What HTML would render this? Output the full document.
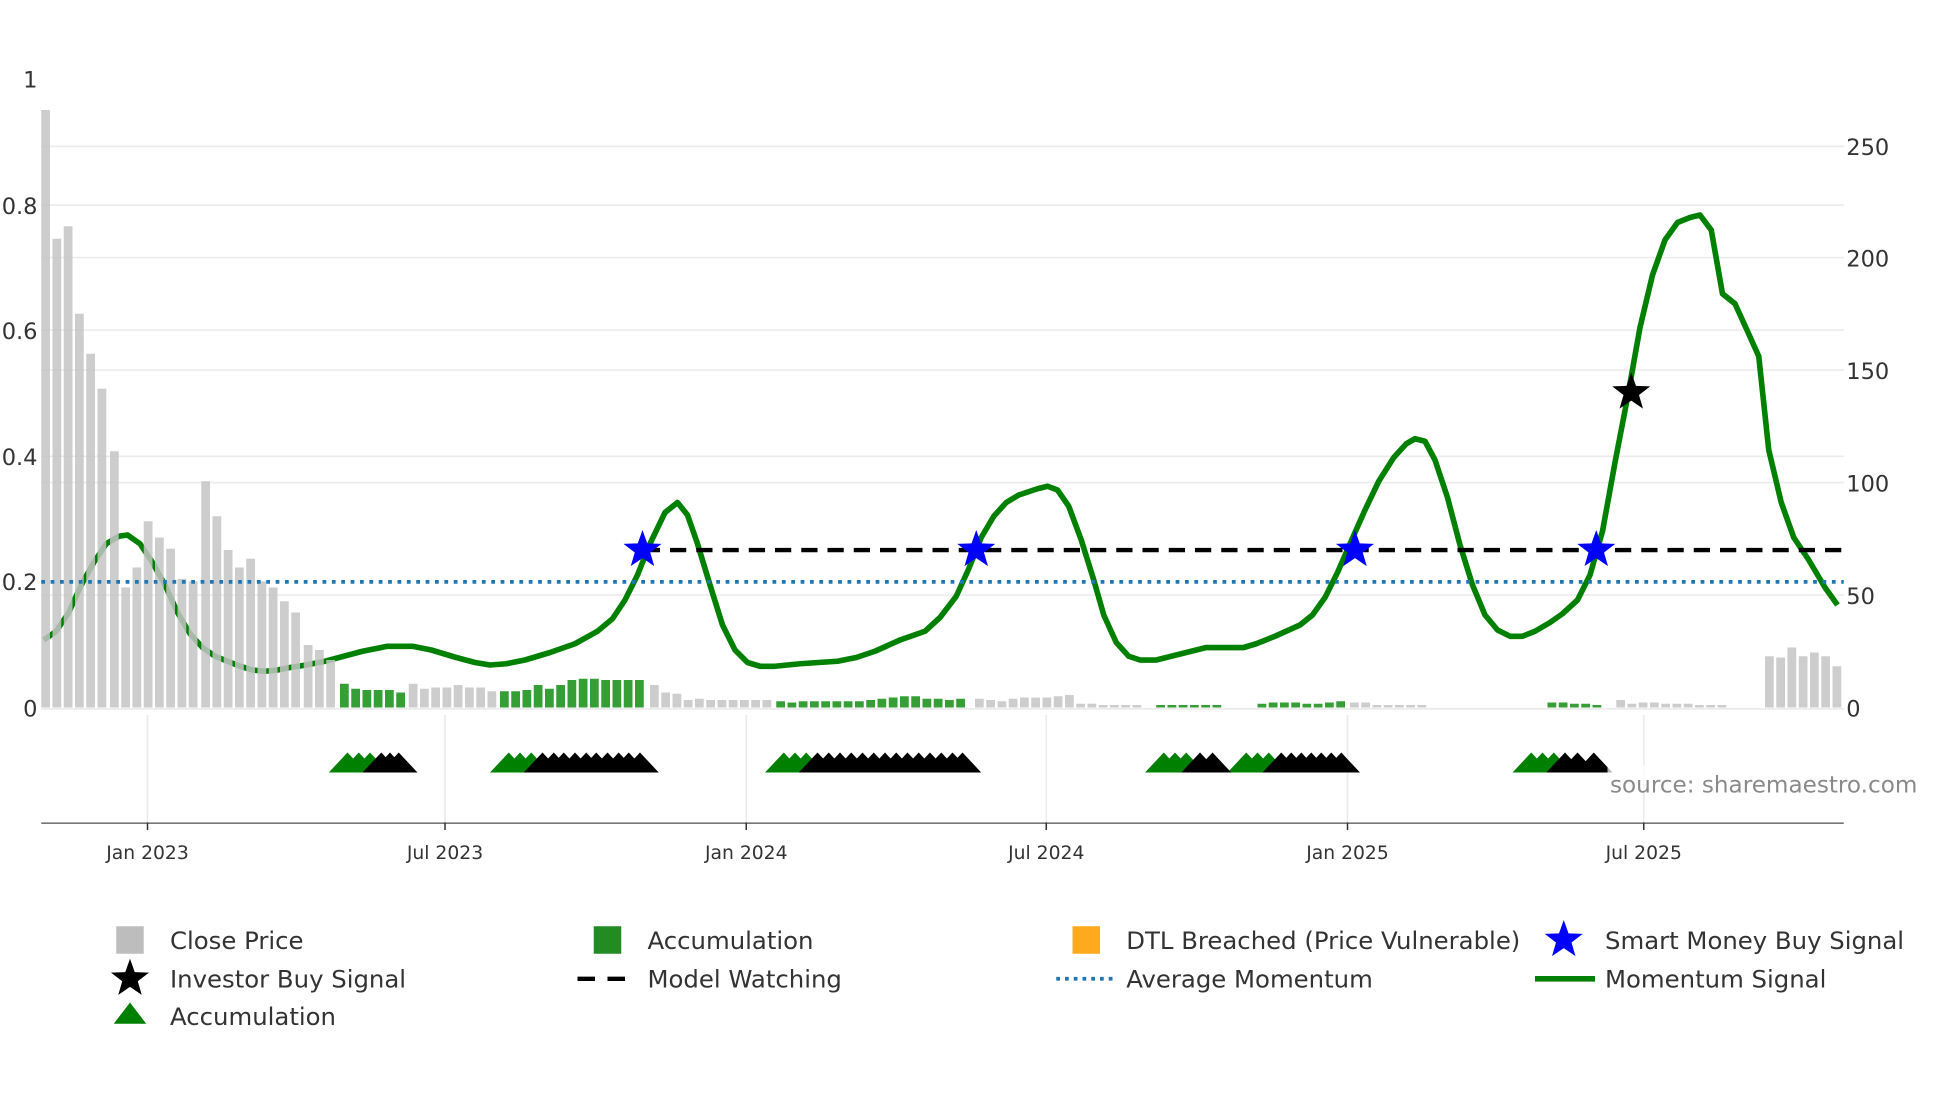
<!DOCTYPE html>
<html><head><meta charset="utf-8"><style>
html,body{margin:0;padding:0;background:#fff;}
svg{display:block;}
text{font-family:"DejaVu Sans","Liberation Sans",sans-serif;fill:#333;}
</style></head><body>
<svg width="1960" height="1102" viewBox="0 0 1568 881.6" preserveAspectRatio="none" xmlns="http://www.w3.org/2000/svg">
<defs>
<path id="st" d="M0,-16 L3.8,-5.3 L15.2,-4.9 L6.2,2 L9.4,12.9 L0,6.5 L-9.4,12.9 L-6.2,2 L-15.2,-4.9 L-3.8,-5.3Z"/>
<path id="tr" d="M-15,0 L0,-16 L15,0Z"/>
</defs>
<g stroke="#ebebeb" stroke-width="1.3">
<line x1="33" x2="1475" y1="117" y2="117"/><line x1="33" x2="1475" y1="164" y2="164"/>
<line x1="33" x2="1475" y1="206" y2="206"/><line x1="33" x2="1475" y1="264" y2="264"/>
<line x1="33" x2="1475" y1="296" y2="296"/><line x1="33" x2="1475" y1="365" y2="365"/>
<line x1="33" x2="1475" y1="386" y2="386"/><line x1="33" x2="1475" y1="476" y2="476"/>
<line x1="33" x2="1475" y1="567" y2="567"/>
<line x1="118" x2="118" y1="572" y2="658"/><line x1="356" x2="356" y1="572" y2="658"/>
<line x1="597" x2="597" y1="572" y2="658"/><line x1="837" x2="837" y1="572" y2="658"/>
<line x1="1078" x2="1078" y1="572" y2="658"/><line x1="1315" x2="1315" y1="572" y2="658"/>
</g>
<polyline fill="none" stroke="#008000" stroke-width="4.5" stroke-linejoin="round" points="35,512 45,505 55,490 65,468 75,450 85,435 95,429 102,428 112,435 122,450 132,468 142,490 152,507 162,518 172,525 182,529 192,533 202,536 212,537 222,536 232,534 245,532 260,529 275,525 290,521 310,517 330,517 345,520 365,526 380,530 392,532 405,531 420,528 440,522 460,515 478,505 490,495 500,480 510,460 520,435 532,410 542,402 550,412 558,435 568,468 578,500 588,520 598,530 608,533 620,533 640,531 670,529 685,526 700,521 720,512 740,505 752,494 765,477 775,455 785,430 795,413 805,402 815,396 830,391 838,389 846,392 855,405 865,432 875,464 883,492 893,514 903,525 912,528 925,528 945,523 965,518 995,518 1005,515 1020,509 1040,500 1050,492 1060,478 1070,458 1080,435 1092,408 1103,385 1115,366 1125,355 1132,351 1140,353 1148,368 1158,398 1168,436 1178,468 1188,492 1198,504 1208,509 1218,509 1228,505 1240,498 1250,491 1262,480 1272,460 1282,425 1292,370 1302,318 1312,262 1322,220 1332,192 1342,178 1352,174 1360,172 1369,184 1378,235 1388,243 1398,265 1407,285 1415,360 1425,402 1435,430 1447,448 1460,470 1470,484"/>
<g fill="#c4c4c4" fill-opacity="0.85">
<rect x="33" y="88" width="7" height="478"/><rect x="42" y="191" width="7" height="375"/>
<rect x="51" y="181" width="7" height="385"/><rect x="60" y="251" width="7" height="315"/>
<rect x="69" y="283" width="7" height="283"/><rect x="78" y="311" width="7" height="255"/>
<rect x="88" y="361" width="7" height="205"/><rect x="97" y="470" width="7" height="96"/>
<rect x="106" y="454" width="7" height="112"/><rect x="115" y="417" width="7" height="149"/>
<rect x="124" y="430" width="7" height="136"/><rect x="133" y="439" width="7" height="127"/>
<rect x="142" y="463" width="7" height="103"/><rect x="151" y="465" width="7" height="101"/>
<rect x="161" y="385" width="7" height="181"/><rect x="170" y="413" width="7" height="153"/>
<rect x="179" y="440" width="7" height="126"/><rect x="188" y="454" width="7" height="112"/>
<rect x="197" y="447" width="7" height="119"/><rect x="206" y="465" width="7" height="101"/>
<rect x="215" y="470" width="7" height="96"/><rect x="224" y="481" width="7" height="85"/>
<rect x="233" y="490" width="7" height="76"/><rect x="243" y="516" width="7" height="50"/>
<rect x="252" y="520" width="7" height="46"/><rect x="261" y="528" width="7" height="38"/>
<rect x="327" y="547" width="7" height="19"/><rect x="336" y="551" width="7" height="15"/>
<rect x="345" y="550" width="7" height="16"/><rect x="354" y="550" width="7" height="16"/>
<rect x="363" y="548" width="7" height="18"/><rect x="372" y="550" width="7" height="16"/>
<rect x="381" y="550" width="7" height="16"/><rect x="390" y="553" width="7" height="13"/>
<rect x="520" y="548" width="7" height="18"/><rect x="529" y="554" width="7" height="12"/>
<rect x="538" y="555" width="7" height="11"/><rect x="547" y="560" width="7" height="6"/>
<rect x="556" y="559" width="7" height="7"/><rect x="565" y="560" width="7" height="6"/>
<rect x="574" y="560" width="7" height="6"/><rect x="583" y="560" width="7" height="6"/>
<rect x="592" y="560" width="7" height="6"/><rect x="601" y="560" width="7" height="6"/>
<rect x="610" y="560" width="7" height="6"/>
<rect x="780" y="559" width="7" height="7"/><rect x="789" y="560" width="7" height="6"/>
<rect x="798" y="561" width="7" height="5"/><rect x="807" y="559" width="7" height="7"/>
<rect x="816" y="558" width="7" height="8"/><rect x="825" y="558" width="7" height="8"/>
<rect x="834" y="558" width="7" height="8"/><rect x="843" y="557" width="7" height="9"/>
<rect x="852" y="556" width="7" height="10"/>
<rect x="861" y="563" width="7" height="3"/><rect x="870" y="563" width="7" height="3"/>
<rect x="879" y="564" width="7" height="2"/><rect x="888" y="564" width="7" height="2"/>
<rect x="897" y="564" width="7" height="2"/><rect x="906" y="564" width="7" height="2"/>
<rect x="1080" y="562" width="7" height="4"/><rect x="1089" y="562" width="7" height="4"/>
<rect x="1098" y="564" width="7" height="2"/><rect x="1107" y="564" width="7" height="2"/>
<rect x="1116" y="564" width="7" height="2"/><rect x="1125" y="564" width="7" height="2"/>
<rect x="1134" y="564" width="7" height="2"/>
<rect x="1293" y="560" width="7" height="6"/><rect x="1302" y="563" width="7" height="3"/>
<rect x="1311" y="562" width="7" height="4"/><rect x="1320" y="562" width="7" height="4"/>
<rect x="1329" y="563" width="7" height="3"/><rect x="1338" y="563" width="7" height="3"/>
<rect x="1347" y="563" width="7" height="3"/><rect x="1356" y="564" width="7" height="2"/>
<rect x="1365" y="564" width="7" height="2"/><rect x="1374" y="564" width="7" height="2"/>
<rect x="1412" y="525" width="7" height="41"/><rect x="1421" y="526" width="7" height="40"/>
<rect x="1430" y="518" width="7" height="48"/><rect x="1439" y="525" width="7" height="41"/>
<rect x="1448" y="522" width="7" height="44"/><rect x="1457" y="525" width="7" height="41"/>
<rect x="1466" y="533" width="7" height="33"/>
</g>
<g fill="#2a9a2a" fill-opacity="0.95">
<rect x="272" y="547" width="7" height="19"/><rect x="281" y="551" width="7" height="15"/>
<rect x="290" y="552" width="7" height="14"/><rect x="299" y="552" width="7" height="14"/>
<rect x="308" y="552" width="7" height="14"/><rect x="317" y="554" width="7" height="12"/>
<rect x="400" y="553" width="7" height="13"/><rect x="409" y="553" width="7" height="13"/>
<rect x="418" y="552" width="7" height="14"/><rect x="427" y="548" width="7" height="18"/>
<rect x="436" y="551" width="7" height="15"/><rect x="445" y="548" width="7" height="18"/>
<rect x="454" y="544" width="7" height="22"/><rect x="463" y="543" width="7" height="23"/>
<rect x="472" y="543" width="7" height="23"/><rect x="481" y="544" width="7" height="22"/>
<rect x="490" y="544" width="7" height="22"/><rect x="499" y="544" width="7" height="22"/>
<rect x="508" y="544" width="7" height="22"/>
<rect x="621" y="561" width="7" height="5"/><rect x="630" y="562" width="7" height="4"/>
<rect x="639" y="561" width="7" height="5"/><rect x="648" y="561" width="7" height="5"/>
<rect x="657" y="561" width="7" height="5"/><rect x="666" y="561" width="7" height="5"/>
<rect x="675" y="561" width="7" height="5"/><rect x="684" y="561" width="7" height="5"/>
<rect x="693" y="560" width="7" height="6"/><rect x="702" y="559" width="7" height="7"/>
<rect x="711" y="558" width="7" height="8"/><rect x="720" y="557" width="7" height="9"/>
<rect x="729" y="557" width="7" height="9"/><rect x="738" y="559" width="7" height="7"/>
<rect x="747" y="559" width="7" height="7"/><rect x="756" y="560" width="7" height="6"/>
<rect x="765" y="559" width="7" height="7"/>
<rect x="925" y="564" width="7" height="2"/><rect x="934" y="564" width="7" height="2"/>
<rect x="943" y="564" width="7" height="2"/><rect x="952" y="564" width="7" height="2"/>
<rect x="961" y="564" width="7" height="2"/><rect x="970" y="564" width="7" height="2"/>
<rect x="1006" y="563" width="7" height="3"/><rect x="1015" y="562" width="7" height="4"/>
<rect x="1024" y="562" width="7" height="4"/><rect x="1033" y="562" width="7" height="4"/>
<rect x="1042" y="563" width="7" height="3"/><rect x="1051" y="563" width="7" height="3"/>
<rect x="1060" y="562" width="7" height="4"/><rect x="1069" y="561" width="7" height="5"/>
<rect x="1238" y="562" width="7" height="4"/><rect x="1247" y="562" width="7" height="4"/>
<rect x="1256" y="563" width="7" height="3"/><rect x="1265" y="563" width="7" height="3"/>
<rect x="1274" y="564" width="7" height="2"/>
</g>
<line x1="33" x2="1475" y1="465.5" y2="465.5" stroke="#1f77b4" stroke-width="3" stroke-dasharray="3,4.5"/>
<line x1="515" x2="1475" y1="440" y2="440" stroke="#000" stroke-width="3.5" stroke-dasharray="13,8"/>
<g fill="#0000ff"><use href="#st" x="514" y="440"/><use href="#st" x="781" y="440"/><use href="#st" x="1084" y="440"/><use href="#st" x="1277" y="440"/></g>
<use href="#st" x="1305" y="314" fill="#000"/>
<g fill="#008000">
<use href="#tr" x="278" y="618"/><use href="#tr" x="287" y="618"/><use href="#tr" x="296" y="618"/>
<use href="#tr" x="407" y="618"/><use href="#tr" x="416" y="618"/><use href="#tr" x="425" y="618"/>
<use href="#tr" x="627" y="618"/><use href="#tr" x="636" y="618"/><use href="#tr" x="645" y="618"/>
<use href="#tr" x="931" y="618"/><use href="#tr" x="940" y="618"/><use href="#tr" x="949" y="618"/>
<use href="#tr" x="997" y="618"/><use href="#tr" x="1006" y="618"/><use href="#tr" x="1015" y="618"/>
<use href="#tr" x="1225" y="618"/><use href="#tr" x="1234" y="618"/><use href="#tr" x="1243" y="618"/>
</g>
<g fill="#000">
<use href="#tr" x="305" y="618"/><use href="#tr" x="312" y="618"/><use href="#tr" x="319" y="618"/>
<use href="#tr" x="434" y="618"/><use href="#tr" x="443" y="618"/><use href="#tr" x="451" y="618"/><use href="#tr" x="460" y="618"/><use href="#tr" x="469" y="618"/><use href="#tr" x="477" y="618"/><use href="#tr" x="486" y="618"/><use href="#tr" x="495" y="618"/><use href="#tr" x="503" y="618"/><use href="#tr" x="512" y="618"/>
<use href="#tr" x="654" y="618"/><use href="#tr" x="663" y="618"/><use href="#tr" x="672" y="618"/><use href="#tr" x="681" y="618"/><use href="#tr" x="690" y="618"/><use href="#tr" x="699" y="618"/><use href="#tr" x="708" y="618"/><use href="#tr" x="717" y="618"/><use href="#tr" x="726" y="618"/><use href="#tr" x="735" y="618"/><use href="#tr" x="744" y="618"/><use href="#tr" x="753" y="618"/><use href="#tr" x="762" y="618"/><use href="#tr" x="770" y="618"/>
<use href="#tr" x="960" y="618"/><use href="#tr" x="970" y="618"/>
<use href="#tr" x="1025" y="618"/><use href="#tr" x="1033" y="618"/><use href="#tr" x="1041" y="618"/><use href="#tr" x="1049" y="618"/><use href="#tr" x="1057" y="618"/><use href="#tr" x="1065" y="618"/><use href="#tr" x="1073" y="618"/>
<use href="#tr" x="1252" y="618"/><use href="#tr" x="1262" y="618"/><use href="#tr" x="1275" y="618"/>
</g>
<rect x="1286" y="612" width="262" height="22" fill="#fff" fill-opacity="0.7"/>
<text x="1288" y="634" font-size="18.5" style="fill:#8a8a8a">source: sharemaestro.com</text>
<line x1="33" x2="1475" y1="658.5" y2="658.5" stroke="#777" stroke-width="1.3"/>
<g stroke="#333" stroke-width="1.2">
<line x1="118" x2="118" y1="658" y2="664"/><line x1="356" x2="356" y1="658" y2="664"/>
<line x1="597" x2="597" y1="658" y2="664"/><line x1="837" x2="837" y1="658" y2="664"/>
<line x1="1078" x2="1078" y1="658" y2="664"/><line x1="1315" x2="1315" y1="658" y2="664"/>
</g>
<g font-size="15" text-anchor="middle">
<text x="118" y="687">Jan 2023</text><text x="356" y="687">Jul 2023</text>
<text x="597" y="687">Jan 2024</text><text x="837" y="687">Jul 2024</text>
<text x="1078" y="687">Jan 2025</text><text x="1315" y="687">Jul 2025</text>
</g>
<g font-size="18" text-anchor="end">
<text x="30" y="70">1</text><text x="30" y="171">0.8</text><text x="30" y="271">0.6</text>
<text x="30" y="372">0.4</text><text x="30" y="472">0.2</text><text x="30" y="573">0</text>
</g>
<g font-size="18">
<text x="1477" y="124">250</text><text x="1477" y="213">200</text><text x="1477" y="303">150</text>
<text x="1477" y="393">100</text><text x="1477" y="483">50</text><text x="1477" y="573">0</text>
</g>
<rect x="93" y="741" width="22" height="22" fill="#bdbdbd"/>
<rect x="475" y="741" width="22" height="22" fill="#228b22"/>
<rect x="858" y="741" width="22" height="22" fill="#ffa91f"/>
<use href="#st" x="1251" y="752" fill="#0000ff"/>
<use href="#st" x="104" y="783" fill="#000"/>
<line x1="462" x2="508" y1="783" y2="783" stroke="#000" stroke-width="3.5" stroke-dasharray="14,10"/>
<line x1="845" x2="891" y1="783" y2="783" stroke="#1f77b4" stroke-width="3" stroke-dasharray="3,4"/>
<line x1="1228" x2="1276" y1="783" y2="783" stroke="#008000" stroke-width="4.5"/>
<path d="M91,819 L104,802 L117,819Z" fill="#008000"/>
<g font-size="19.5">
<text x="136" y="759">Close Price</text><text x="518" y="759">Accumulation</text>
<text x="901" y="759">DTL Breached (Price Vulnerable)</text><text x="1284" y="759">Smart Money Buy Signal</text>
<text x="136" y="790">Investor Buy Signal</text><text x="518" y="790">Model Watching</text>
<text x="901" y="790">Average Momentum</text><text x="1284" y="790">Momentum Signal</text>
<text x="136" y="820">Accumulation</text>
</g>
</svg>
</body></html>
